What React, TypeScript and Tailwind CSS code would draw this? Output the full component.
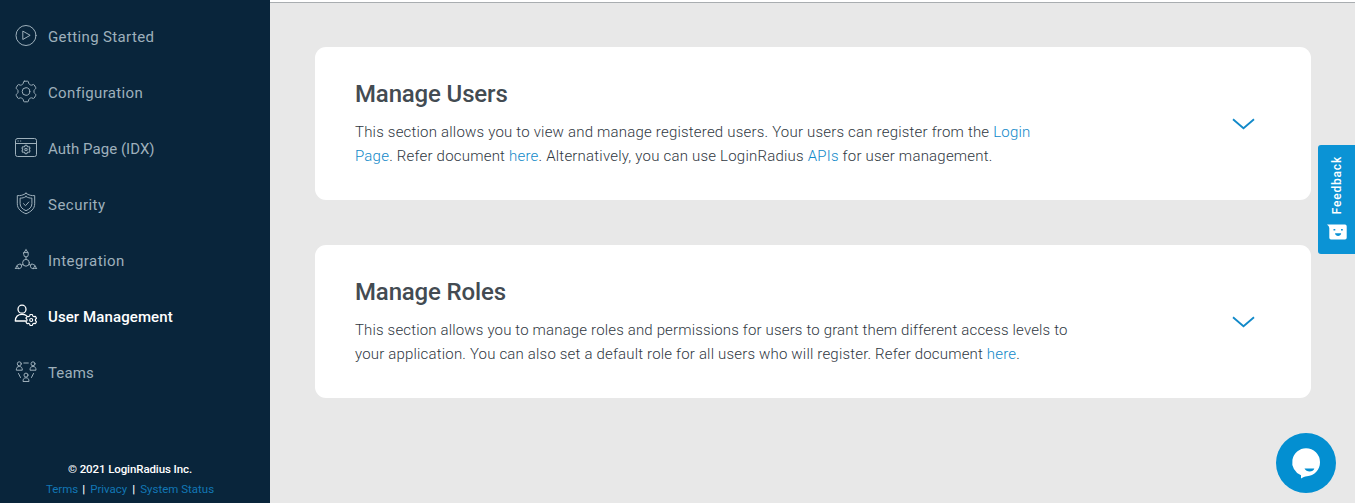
import type { ReactNode } from "react";

const COG =
  "M-1.7-10.300H1.700Q2.300-10.300 2.400-9.700L2.700-8.200Q2.900-7.500 3.500-7.200L4.600-6.500Q5.200-6.200 5.800-6.400L7.300-6.900Q7.900-7.100 8.200-6.600L9.800-3.800Q10.100-3.200 9.600-2.800L8.500-1.800Q8-1.400 8-.800V.800Q8 1.400 8.500 1.800L9.600 2.800Q10.100 3.200 9.800 3.800L8.200 6.600Q7.900 7.100 7.300 6.900L5.800 6.400Q5.200 6.200 4.600 6.500L3.500 7.200Q2.900 7.500 2.700 8.200L2.400 9.700Q2.300 10.300 1.700 10.300H-1.700Q-2.300 10.300-2.400 9.700L-2.700 8.200Q-2.900 7.500-3.500 7.200L-4.600 6.500Q-5.200 6.200-5.800 6.400L-7.300 6.900Q-7.900 7.100-8.200 6.600L-9.800 3.800Q-10.100 3.200-9.600 2.800L-8.500 1.800Q-8 1.400-8 .800V-.800Q-8-1.400-8.500-1.800L-9.600-2.800Q-10.100-3.200-9.800-3.800L-8.200-6.600Q-7.900-7.100-7.300-6.900L-5.800-6.400Q-5.200-6.200-4.600-6.500L-3.500-7.200Q-2.900-7.500-2.700-8.200L-2.400-9.700Q-2.300-10.300-1.700-10.300Z";

function Icon({ children }: { children: ReactNode }) {
  return (
    <svg
      className="h-6 w-6 shrink-0"
      viewBox="0 0 24 24"
      fill="none"
      stroke="currentColor"
      strokeWidth="1"
      strokeLinecap="round"
      strokeLinejoin="round"
    >
      {children}
    </svg>
  );
}

const Play = () => (
  <Icon>
    <circle cx="12" cy="11.5" r="10" />
    <path d="M8.8 7.500v8l7-4z" />
  </Icon>
);

const Gear = () => (
  <Icon>
    <g transform="translate(12 11.500)">
      <path d={COG} />
      <circle r="3.800" />
    </g>
  </Icon>
);

const AuthPage = () => (
  <Icon>
    <rect x="1.500" y="2.500" width="21" height="18" rx="2" />
    <path d="M1.500 7.500h21M4 5h.3M6.500 5h.3" />
    <g transform="translate(12 13.500) scale(.41)" strokeWidth="2.500">
      <path d={COG} />
      <circle r="3" />
    </g>
  </Icon>
);

const Shield = () => (
  <Icon>
    <path d="M12 1.300c2.800 2 5.600 2.500 8.700 2.300v8.200c0 5-3.800 8-8.700 10-4.900-2-8.700-5-8.700-10V3.600C6.400 3.800 9.200 3.300 12 1.300z" />
    <path d="M12 4.500c2 1.300 3.800 1.700 5.900 1.600v5.600c0 3.400-2.500 5.500-5.900 7-3.400-1.500-5.900-3.600-5.900-7V6.100c2.100.1 3.900-.3 5.900-1.600z" />
    <path d="m9.500 11.700 2 2 3.300-3.700" />
  </Icon>
);

const Plug = ({ turn }: { turn: string }) => (
  <g transform={turn}>
    <path d="M0-3.800V-6M-2.200-10.200h4.400v2.400a2.200 2 0 0 1-4.400 0zM-1.800-10.200l1-2h1.600l1 2M0-12.200v-1.300" />
  </g>
);

const Nodes = () => (
  <Icon>
    <g transform="translate(12 14.800)">
      <circle r="3.400" />
      <Plug turn="rotate(0)" />
      <Plug turn="rotate(118) scale(.9)" />
      <Plug turn="rotate(-118) scale(.9)" />
    </g>
  </Icon>
);

const UserGear = () => (
  <Icon>
    <g strokeWidth="1.300">
      <circle cx="8" cy="5.200" r="4" />
      <path d="M11.500 17H1.300c0-4.500 2.700-6.700 6.700-6.700 1.900 0 3.200.4 4.300 1.300" />
      <g transform="translate(17.200 16) scale(.53)" strokeWidth="2.200">
        <path d={COG} />
        <circle r="2.800" />
      </g>
    </g>
  </Icon>
);

const Member = ({ at }: { at: string }) => (
  <g transform={at}>
    <circle cx="3" cy="2.300" r="2" />
    <path d="M0 8.300c0-2.200 1-3.300 3-3.300s3 1.100 3 3.300z" />
  </g>
);

const Team = () => (
  <Icon>
    <Member at="translate(2.300 1.500)" />
    <Member at="translate(16 1.500)" />
    <Member at="translate(9 12.800)" />
    <path d="M9.800 3h4.500M4.500 13.500l2 4M19.500 13.500l-2 4" />
  </Icon>
);

const NAV = [
  { label: "Getting Started", icon: Play, cls: "tracking-[0.37px]" },
  { label: "Configuration", icon: Gear, cls: "tracking-[0.36px]" },
  { label: "Auth Page (IDX)", icon: AuthPage, cls: "tracking-[0.04px]" },
  { label: "Security", icon: Shield, cls: "tracking-[0.48px]" },
  { label: "Integration", icon: Nodes, cls: "tracking-[0.44px]" },
  { label: "User Management", icon: UserGear, cls: "tracking-[0.1px]", active: true },
  { label: "Teams", icon: Team, cls: "tracking-[0.1px]" },
];

const A = ({ children }: { children: ReactNode }) => (
  <a href="#" className="text-[#1189c9]">
    {children}
  </a>
);

function Card({ title, children }: { title: ReactNode; children: ReactNode }) {
  return (
    <section className="flex h-[153px] items-center justify-between rounded-[11px] bg-white pr-14 pl-10">
      <div>
        <h2 className="mb-[11px] text-2xl leading-[30px] font-medium text-[#434b52]">{title}</h2>
        <p className="text-[15px] leading-6 font-light whitespace-nowrap text-[#30383f]">{children}</p>
      </div>
      <svg className="h-3 w-[23px] shrink-0" viewBox="0 0 23 12" fill="none" stroke="#1189c9" strokeWidth="1.800">
        <path d="m1 1.200 10.500 9L22 1.200" />
      </svg>
    </section>
  );
}

export default function App() {
  return (
    <div className="flex h-[503px] w-full overflow-hidden bg-[#e8e8e8] font-[Roboto,sans-serif]">
      <aside className="flex w-[270px] shrink-0 flex-col justify-between bg-[#09253b] pt-2">
        <nav>
          {NAV.map(({ label, icon: I, cls, active }) => (
            <a
              key={label}
              href="#"
              className={`flex h-14 items-center gap-2.5 pl-3.5 text-[15px] leading-6 ${cls} ${active ? "font-medium text-white" : "text-[#9eb0bb]"}`}
            >
              <I />
              <span className="pt-0.5">{label}</span>
            </a>
          ))}
        </nav>
        <footer className="flex flex-col items-center pr-2.5 pb-1 text-[11.500px] leading-5 text-white">
          <div className="font-medium tracking-[-0.100px]">© 2021 LoginRadius Inc.</div>
          <div className="flex items-center gap-[5px] text-[#1277b5]">
            <a href="#">Terms</a>
            <span className="-ml-px font-bold text-white">|</span>
            <a href="#">Privacy</a>
            <span className="font-bold text-white">|</span>
            <a href="#">System Status</a>
          </div>
        </footer>
      </aside>

      <main className="flex-1">
        <div className="h-[3px] border-b border-[#a9adb0] bg-white" />
        <div className="flex flex-col gap-[45px] pt-11 pr-11 pl-[45px]">
          <Card title={<span className="tracking-[-0.150px]">Manage Users</span>}>
            <span className="block tracking-[0.200px]">
              This section allows you to view and manage registered users. Your users can register from the <A>Login</A>
            </span>
            <span className="block tracking-[0.210px]">
              <A>Page</A>. Refer document <A>here</A>. Alternatively, you can use LoginRadius <A>APIs</A> for user
              management.
            </span>
          </Card>
          <Card title={<span className="tracking-[-0.150px]">Manage Roles</span>}>
            <span className="block tracking-[0.160px]">
              This section allows you to manage roles and permissions for users to grant them different access levels to
            </span>
            <span className="block tracking-[0.180px]">
              your application. You can also set a default role for all users who will register. Refer document{" "}
              <A>here</A>.
            </span>
          </Card>
        </div>
      </main>

      <button className="fixed top-[145px] right-0 flex h-[109px] w-[37px] flex-col items-center justify-end gap-2.5 rounded-l-[3px] bg-[#0b93d5] pb-3.5 text-white">
        <span className="rotate-180 text-[12px] leading-4 font-medium tracking-[0.800px] [writing-mode:vertical-rl]">
          Feedback
        </span>
        <svg className="h-4 w-5" viewBox="0 0 20 16" fill="none">
          <path d="M0 .5h18q1.700 0 1.700 1.700v11.600q0 1.700-1.700 1.700H4q-1.700 0-1.700-1.700V4Q2.300 2 0 .5z" fill="#fff" />
          <path d="M8 9.300h6.200c-.4 3.600-5.800 3.600-6.200 0zM6.500 5h1.800v1.500H6.500zM14 5h1.800v1.500H14z" fill="#0b93d5" />
        </svg>
      </button>

      <button className="fixed right-[19px] bottom-2.5 h-[60px] w-[60px] rounded-full bg-[#038fd1]">
        <svg viewBox="0 0 60 60" fill="none">
          <path
            d="M30 15.200a14 14 0 0 1 14 14c0 8-6 13.500-13 14-2.300.2-4.200 1.200-6 2.300v-3.300A14 14 0 0 1 30 15.200z"
            fill="#fff"
          />
          <path d="M28.500 35.500h9.800c-.7 3.800-8.100 4.200-9.800 0z" fill="#038fd1" />
        </svg>
      </button>
    </div>
  );
}
